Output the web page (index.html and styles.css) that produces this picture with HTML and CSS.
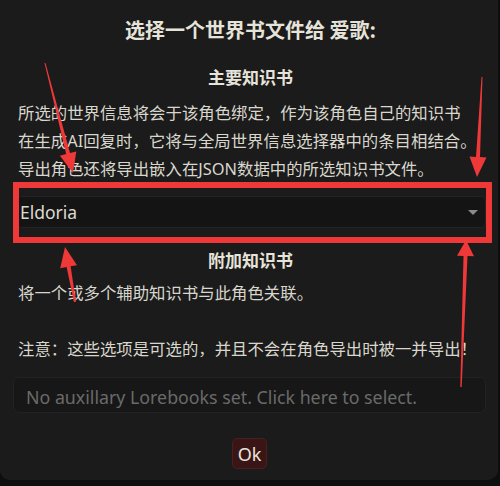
FILE: index.html
```html
<!DOCTYPE html>
<html lang="zh">
<head>
<meta charset="utf-8">
<title>世界书</title>
<link rel="stylesheet" href="styles.css">
</head>
<body>
<div class="dialog">
  <h3 class="title">选择一个世界书文件给 爱歌:</h3>
  <h4 class="section-title">主要知识书</h4>
  <p class="desc">所选的世界信息将会于该角色绑定，作为该角色自己的知识书<br>在生成AI回复时，它将与全局世界信息选择器中的条目相结合。<br>导出角色还将导出嵌入在JSON数据中的所选知识书文件。</p>
  <div class="select">
    <span class="select-value">Eldoria</span>
    <span class="caret"></span>
  </div>
  <h4 class="section-title extra">附加知识书</h4>
  <p class="desc extra-desc">将一个或多个辅助知识书与此角色关联。<br><br>注意：这些选项是可选的，并且不会在角色导出时被一并导出！</p>
  <div class="picker">No auxillary Lorebooks set. Click here to select.</div>
  <div class="actions">
    <button class="ok-btn">Ok</button>
  </div>
</div>

<!-- red callouts drawn over the dialog -->
<svg class="callouts" width="500" height="486" viewBox="0 0 500 486">
  <rect x="16" y="185" width="473" height="55" fill="none" stroke="#ef3838" stroke-width="6"/>
  <polygon fill="#ef3838" points="44.5,63.1 66.2,154.1 59.9,155.7 73,173 76.3,151.5 70,153.1 45.5,62.9"/>
  <polygon fill="#ef3838" points="481.5,77 476,156.9 469.5,156.6 477,177 486.5,157.4 480,157.1 482.5,77"/>
  <polygon fill="#ef3838" points="74,302.2 66.6,267.1 60.2,268.2 65,247 77,265.2 70.6,266.3 76,301.8"/>
  <polygon fill="#ef3838" points="460.3,387 463.5,255.9 457,255.7 466,240 474,256.3 467.5,256.1 461.7,387"/>
</svg>
</body>
</html>
```
FILE: styles.css
```css
* {
  box-sizing: border-box;
}

html,
body {
  margin: 0;
  padding: 0;
}

body {
  width: 500px;
  height: 486px;
  background: #0e0e0e;
  font-family: "Noto Sans", "Noto Sans CJK SC", sans-serif;
  color: #d9d7cd;
  position: relative;
  overflow: hidden;
}

.dialog {
  width: 498px;
  height: 480px;
  background: #1b1b1b;
  border-radius: 0 0 10px 10px;
  padding: 16px 14px 11px 17px;
  display: flex;
  flex-direction: column;
}

.title {
  margin: 0;
  text-align: center;
  font-family: "Noto Sans CJK SC", sans-serif;
  font-size: 20px;
  line-height: 28px;
  font-weight: 700;
  color: #e6e4da;
}

.section-title {
  margin: 19px 0 0;
  text-align: center;
  font-family: "Noto Sans CJK SC", sans-serif;
  font-size: 17px;
  line-height: 28px;
  font-weight: 700;
  color: #e6e4da;
}

.desc {
  margin: 8px 0 0 1px;
  font-size: 16.4px;
  line-height: 28px;
  white-space: nowrap;
  color: #d9d7cd;
}

.select {
  margin-top: 13px;
  height: 32px;
  width: 469px;
  background: #141414;
  border: 1px solid #242424;
  border-radius: 5px;
  display: flex;
  align-items: center;
  justify-content: space-between;
  padding: 0 7px 0 2px;
}

.select-value {
  font-size: 17.5px;
  color: #dcdad0;
}

.caret {
  width: 0;
  height: 0;
  border-left: 5px solid transparent;
  border-right: 5px solid transparent;
  border-top: 5px solid #8a8a8a;
  margin-top: 1px;
}

.section-title.extra {
  margin-top: 18px;
}

.extra-desc {
  margin-top: 5px;
}

.picker {
  margin: 14px 0 0 -4px;
  height: 36px;
  width: 473px;
  background: #171717;
  border: 1px solid #222;
  border-radius: 6px;
  display: flex;
  align-items: center;
  padding: 4px 0 0 12px;
  font-size: 17.8px;
  color: #6a6a6a;
  white-space: nowrap;
}

.actions {
  margin-top: 25px;
  display: flex;
  justify-content: center;
  padding-right: 2px;
}

.ok-btn {
  width: 35px;
  height: 31px;
  padding: 0;
  background: #3a1515;
  border: 1px solid #4a1f1f;
  border-radius: 5px;
  color: #e8e6dc;
  font-family: "Noto Sans", sans-serif;
  font-size: 18px;
  line-height: 1;
}

.callouts {
  position: absolute;
  left: 0;
  top: 0;
  pointer-events: none;
}
```
